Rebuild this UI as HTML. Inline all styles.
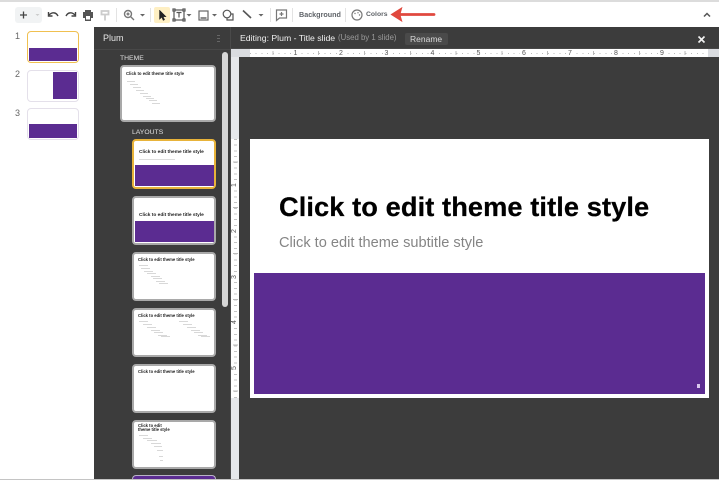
<!DOCTYPE html>
<html><head><meta charset="utf-8">
<style>
html,body{margin:0;padding:0;width:719px;height:480px;overflow:hidden;background:#fff;font-family:"Liberation Sans",sans-serif}
body{filter:blur(.35px)}
div,span,svg{position:absolute;box-sizing:border-box}
.tx{white-space:nowrap}
.st{left:27px;width:52px;height:32px;background:#fff;border:1.5px solid #e4e0ea;border-radius:4px}
.p{background:#5b2c91}
.n{font-size:9px;color:#666;left:15px}
.th{width:84px;background:#fff;border:2px solid #a9a9a9;border-radius:4px;left:132px;overflow:hidden;height:49px}
.tt{font-weight:bold;color:#222;white-space:nowrap;font-size:4.2px;left:4px}
.l{height:1px;background:#d8d8d8}
.rn{font-size:7px;color:#555;top:49.5px;line-height:7px;height:7px;width:8px;text-align:center;background:#fff}
.vn{font-size:7px;color:#555;left:231px;width:8px;height:8px;line-height:8px;text-align:center;transform:rotate(-90deg);background:#fff}
</style></head><body>
<!-- toolbar -->
<div style="left:0;top:0;width:719px;height:2px;background:#dcdcdc"></div>
<div style="left:15px;top:7px;width:27px;height:16px;background:#f1f3f4;border-radius:3px"></div>
<svg style="left:0;top:0" width="719" height="27" fill="none" stroke="#444" stroke-width="1.4">
<path d="M23.500 11.500v7M20 15h7" stroke="#444" stroke-width="1.300"/>
<path d="M35.500 14l2 2 2-2z" fill="#ccc" stroke="none"/>
<path d="M49 15c3-3 7-3 9 1" /><path d="M48.500 12v4h4" fill="none"/>
<path d="M75 15c-3-3-7-3-9 1"/><path d="M75.500 12v4h-4"/>
<path d="M83 12h10v6h-2v3h-6v-3h-2z" fill="#555" stroke="none"/><rect x="85" y="10" width="6" height="2" fill="#555" stroke="none"/><rect x="86" y="16" width="4" height="3.500" fill="#fff" stroke="none"/>
<path d="M101.500 11h7v3.500h-7zM105 15v5.500" stroke="#ccc" stroke-width="1.800"/>
<path d="M116.500 8v14" stroke="#e3e3e3" stroke-width="1"/>
<circle cx="128" cy="14" r="3.500" stroke="#777"/><path d="M130.500 16.500l3.500 3.500M126.500 14h3M128 12.500v3" stroke="#777"/>
<path d="M140 14l2.500 2.500 2.500-2.500z" fill="#666" stroke="none"/>
<path d="M150.500 8v14" stroke="#e3e3e3" stroke-width="1"/>
</svg>
<div style="left:154px;top:7px;width:16px;height:16px;background:#feefc3;border-radius:2px"></div>
<svg style="left:0;top:0" width="719" height="27" fill="none" stroke="#555" stroke-width="1.200">
<path d="M159.500 10v9.500l2.200-2.200 1.500 3.200 1.500-.8-1.500-3h3z" fill="#222" stroke="#222" stroke-width=".4"/>
<rect x="174" y="10" width="10" height="10"/><rect x="173" y="9" width="2" height="2" fill="#fff"/><rect x="183" y="9" width="2" height="2" fill="#fff"/><rect x="173" y="19" width="2" height="2" fill="#fff"/><rect x="183" y="19" width="2" height="2" fill="#fff"/>
<path d="M176.500 12.500h5M179 12.500v5"/>
<path d="M186.500 14l2.500 2.500 2.500-2.500z" fill="#666" stroke="none"/>
<rect x="199" y="11" width="9" height="9" stroke="#666"/><path d="M200.500 18h6" stroke="#666" stroke-width="1.500"/>
<path d="M212 14l2.500 2.500 2.500-2.500z" fill="#666" stroke="none"/>
<circle cx="227" cy="14" r="3.800"/><path d="M231 14h2v6h-6v-2" />
<path d="M243 10.500l8 7.500" stroke="#555" stroke-width="1.600"/>
<path d="M258.500 14l2.500 2.500 2.500-2.500z" fill="#666" stroke="none"/>
<path d="M270.500 8v14M292.500 8v14M345.500 8v14" stroke="#e3e3e3" stroke-width="1"/>
<path d="M276.500 10h10v8h-7l-3 2.500z" stroke="#777"/><path d="M281.500 12v4M279.500 14h4" stroke="#777"/>
<circle cx="357" cy="15" r="5" stroke="#777"/><circle cx="355" cy="13.500" r=".7" fill="#777" stroke="none"/><circle cx="358" cy="12.800" r=".7" fill="#777" stroke="none"/><circle cx="359.500" cy="15" r=".7" fill="#777" stroke="none"/>
<path d="M399 14.500h35" stroke="#e0483e" stroke-width="2.800" stroke-linecap="round"/>
<path d="M391 14.500l11-7-2 7 2 7z" fill="#e0483e" stroke="#e0483e" stroke-width=".6"/>
<path d="M704 16.500l3-3 3 3" stroke="#555" stroke-width="1.500"/>
</svg>
<div class="tx" style="left:299px;top:10px;font-size:7.200px;line-height:10px;font-weight:bold;color:#5f6368">Background</div>
<div class="tx" style="left:366px;top:10px;font-size:6.800px;line-height:10px;font-weight:bold;color:#5f6368">Colors</div>

<!-- filmstrip -->
<div class="n" style="top:31px">1</div><div class="n" style="top:69px">2</div><div class="n" style="top:108px">3</div>
<div class="st" style="top:31px;border:1.500px solid #f0c050"></div>
<div class="p" style="left:29px;top:48px;width:48px;height:12.500px"></div>
<div class="st" style="top:70px"></div>
<div class="p" style="left:53px;top:72px;width:24px;height:27px"></div>
<div class="st" style="top:108px"></div>
<div class="p" style="left:29px;top:124px;width:48px;height:13.500px"></div>

<!-- dark area -->
<div style="left:94px;top:27px;width:625px;height:453px;background:#3c3c3c"></div>
<div style="left:230px;top:27px;width:1px;height:453px;background:#4a4a4a"></div>
<div style="left:94px;top:49px;width:136px;height:1px;background:#484848"></div>
<div style="left:231px;top:48px;width:488px;height:1px;background:#484848"></div>
<div class="tx" style="left:103px;top:32px;font-size:9px;line-height:12px;color:#e8e8e8">Plum</div>
<div style="left:217px;top:35px;width:3px;height:7px;background:repeating-linear-gradient(#666 0 1px,transparent 1px 3px)"></div>
<div class="tx" style="left:120px;top:54px;font-size:6.800px;line-height:10px;color:#e0e0e0">THEME</div>
<div class="tx" style="left:132px;top:128px;font-size:6.800px;line-height:10px;color:#e0e0e0">LAYOUTS</div>
<div style="left:222px;top:52px;width:6px;height:255px;background:#d5d5d5;border-radius:3px"></div>

<div class="tx" style="left:240px;top:32px;font-size:8.700px;line-height:12px;color:#f0f0f0">Editing: Plum - Title slide</div>
<div class="tx" style="left:338px;top:33px;font-size:7.800px;line-height:10px;color:#9a9a9a">(Used by 1 slide)</div>
<div style="left:405px;top:33px;width:43px;height:12px;background:#4a4a4a;border-radius:2px"></div>
<div class="tx" style="left:410px;top:34px;font-size:8.500px;line-height:11px;color:#d8d8d8">Rename</div>
<svg style="left:697px;top:35px" width="9" height="9" stroke="#f2f2f2" stroke-width="1.600"><path d="M1.500 1.500l6 6M7.500 1.500l-6 6"/></svg>

<!-- rulers -->
<div style="left:231px;top:49px;width:488px;height:8px;background:#dadce0"></div>
<div style="left:250px;top:49px;width:458px;height:8px;background:#fff"></div>
<div style="left:250px;top:52.500px;width:458px;height:1px;background:repeating-linear-gradient(90deg,#bbb 0 1px,transparent 1px 5.730px)"></div>
<div style="left:250px;top:51px;width:458px;height:4px;background:repeating-linear-gradient(90deg,transparent 0 22.400px,#bbb 22.400px 23.400px,transparent 23.400px 45.800px)"></div>
<div class="rn" style="left:291.500px">1</div><div class="rn" style="left:337px">2</div><div class="rn" style="left:382.500px">3</div><div class="rn" style="left:428.500px">4</div><div class="rn" style="left:474.500px">5</div><div class="rn" style="left:520px">6</div><div class="rn" style="left:566px">7</div><div class="rn" style="left:612px">8</div><div class="rn" style="left:658px">9</div>
<div style="left:231px;top:57px;width:8px;height:423px;background:#e6e8eb"></div>
<div style="left:231px;top:139px;width:8px;height:259px;background:#fff"></div>
<div style="left:233.500px;top:139px;width:3px;height:259px;background:repeating-linear-gradient(#c4c4c4 0 1px,transparent 1px 5.730px)"></div>
<div style="left:232.500px;top:139px;width:5px;height:259px;background:repeating-linear-gradient(transparent 0 22.400px,#bbb 22.400px 23.400px,transparent 23.400px 45.800px)"></div>
<div class="vn" style="top:181px">1</div><div class="vn" style="top:227px">2</div><div class="vn" style="top:273px">3</div><div class="vn" style="top:318px">4</div><div class="vn" style="top:364px">5</div>

<!-- main slide -->
<div style="left:250px;top:139px;width:459px;height:259px;background:#fff"></div>
<div class="tx" style="left:279px;top:190px;font-size:27.200px;line-height:34px;font-weight:bold;color:#000;letter-spacing:.1px;-webkit-text-stroke:.25px #000">Click to edit theme title style</div>
<div class="tx" style="left:279px;top:232.500px;font-size:14.600px;line-height:20px;color:#858585">Click to edit theme subtitle style</div>
<div class="p" style="left:254px;top:273px;width:451px;height:121px"></div>
<div style="left:696.500px;top:383.500px;width:3px;height:4px;background:#d9c8ee"></div>

<!-- theme thumb -->
<div class="th" style="left:120px;top:65px;width:96px;height:57px"></div>
<div class="tt" style="left:126px;top:71px;font-size:4.300px;line-height:6px">Click to edit theme title style</div>
<div class="l" style="left:127px;top:81px;width:8px"></div><div class="l" style="left:130px;top:84px;width:8px"></div><div class="l" style="left:133px;top:87px;width:8px"></div><div class="l" style="left:136px;top:90px;width:8px"></div><div class="l" style="left:140px;top:93px;width:8px"></div><div class="l" style="left:143px;top:95.500px;width:8px"></div><div class="l" style="left:146px;top:98px;width:8px"></div><div class="l" style="left:149px;top:100px;width:8px"></div><div class="l" style="left:152px;top:102.500px;width:8px"></div>

<!-- layouts -->
<div class="th" style="top:139px;height:50px;border-color:#e8b33a"></div>
<div class="p" style="left:135px;top:165px;width:79px;height:21px"></div>
<div class="tt" style="left:139px;top:150px;font-size:4.800px;line-height:6px">Click to edit theme title style</div>
<div class="l" style="left:139px;top:159px;width:36px;background:#ddd"></div>

<div class="th" style="top:196px"></div>
<div class="p" style="left:135px;top:221px;width:79px;height:21px"></div>
<div class="tt" style="left:139px;top:213px;font-size:4.800px;line-height:6px">Click to edit theme title style</div>

<div class="th" style="top:252px"></div>
<div class="tt" style="left:138px;top:257px;line-height:6px">Click to edit theme title style</div>
<div class="l" style="left:139px;top:265px;width:9px"></div><div class="l" style="left:141px;top:268px;width:9px"></div><div class="l" style="left:144px;top:270.500px;width:9px"></div><div class="l" style="left:147px;top:273px;width:9px"></div><div class="l" style="left:151px;top:275.500px;width:9px"></div><div class="l" style="left:153px;top:278px;width:9px"></div><div class="l" style="left:156px;top:280.500px;width:9px"></div><div class="l" style="left:159px;top:283px;width:9px"></div>

<div class="th" style="top:308px"></div>
<div class="tt" style="left:138px;top:313px;line-height:6px">Click to edit theme title style</div>
<div class="l" style="left:139px;top:321px;width:9px"></div><div class="l" style="left:143px;top:324px;width:9px"></div><div class="l" style="left:147px;top:327px;width:9px"></div><div class="l" style="left:151px;top:329.500px;width:9px"></div><div class="l" style="left:154px;top:332px;width:9px"></div><div class="l" style="left:158px;top:334.500px;width:9px"></div><div class="l" style="left:161px;top:336px;width:9px"></div>
<div class="l" style="left:179px;top:321px;width:9px"></div><div class="l" style="left:183px;top:324px;width:9px"></div><div class="l" style="left:187px;top:327px;width:9px"></div><div class="l" style="left:191px;top:329.500px;width:9px"></div><div class="l" style="left:194px;top:332px;width:9px"></div><div class="l" style="left:198px;top:334.500px;width:9px"></div><div class="l" style="left:201px;top:336px;width:9px"></div>

<div class="th" style="top:364px"></div>
<div class="tt" style="left:138px;top:369px;line-height:6px">Click to edit theme title style</div>

<div class="th" style="top:420px"></div>
<div class="tt" style="left:138px;top:424px;line-height:4px">Click to edit<br>theme title style</div>
<div class="l" style="left:139px;top:435px;width:9px"></div><div class="l" style="left:143px;top:438px;width:9px"></div><div class="l" style="left:147px;top:440px;width:10px"></div><div class="l" style="left:151px;top:443px;width:10px"></div><div class="l" style="left:154px;top:446px;width:8px"></div><div class="l" style="left:157px;top:450px;width:6px"></div><div class="l" style="left:159px;top:456px;width:4px"></div><div class="l" style="left:160px;top:460px;width:3px"></div>

<div style="left:132px;top:475px;width:84px;height:5px;background:#5b2c91;border:1.500px solid #b9b3c6;border-bottom:0;border-radius:4px 4px 0 0"></div>
<div style="left:0;top:479px;width:719px;height:1px;background:#c4c4c4"></div>
</body></html>
